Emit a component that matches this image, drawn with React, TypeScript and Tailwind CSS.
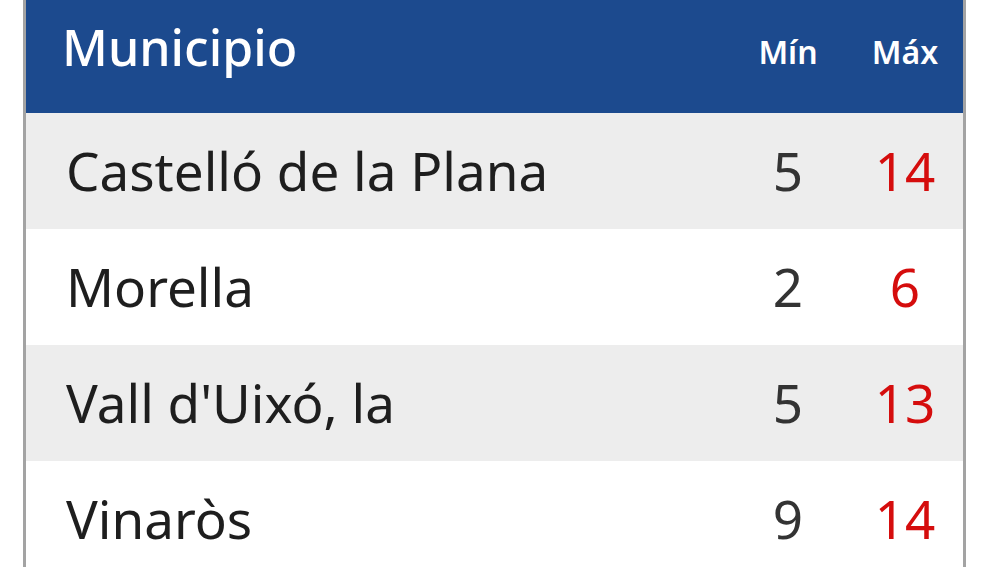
import React from 'react';

const rows = [
  { name: 'Castelló de la Plana', min: 5, max: 14 },
  { name: 'Morella', min: 2, max: 6 },
  { name: "Vall d'Uixó, la", min: 5, max: 13 },
  { name: 'Vinaròs', min: 9, max: 14 },
];

export default function App() {
  return (
    <div className="w-[1000px] h-[567px] overflow-hidden bg-white" style={{ fontFamily: '"Noto Sans", sans-serif' }}>
      <div className="ml-[23px] w-[943px] border-x-[3px] border-[#a3a3a3]">
        <div className="flex items-center h-[113px] bg-[#1c4a8e] text-white">
          <div className="flex-1 pl-[36px] pb-[18px] text-[50px] font-medium">Municipio</div>
          <div className="w-[118px] text-center pb-[10px] text-[32px] font-semibold">Mín</div>
          <div className="w-[116px] text-center pb-[10px] text-[32px] font-semibold">Máx</div>
        </div>
        {rows.map((r, i) => (
          <div
            key={r.name}
            className={`flex items-center h-[116px] text-[53px] ${i % 2 === 0 ? 'bg-[#ededed]' : 'bg-white'}`}
          >
            <div className="flex-1 pl-[40px] text-[#1e1e1e]">{r.name}</div>
            <div className="w-[118px] text-center text-[#333]">{r.min}</div>
            <div className="w-[116px] text-center text-[#d50d0d]">{r.max}</div>
          </div>
        ))}
      </div>
    </div>
  );
}
